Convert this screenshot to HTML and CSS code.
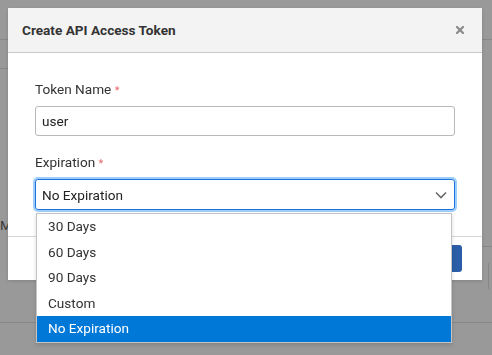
FILE: index.html
```html
<!DOCTYPE html>
<html lang="en">
<head>
  <meta charset="UTF-8">
  <meta name="viewport" content="width=device-width, initial-scale=1.0">
  <title>Create API Access Token</title>
  <link rel="stylesheet" href="styles.css">
</head>
<body>
  <div class="page">
    <div class="page-top"></div>
    <div class="page-tabs"><div class="page-tab"></div></div>
    <div class="page-text">Max</div>
    <div class="page-row page-row-right"></div>
    <div class="page-row page-row-split"><div class="page-cell"></div></div>
    <div class="page-row"></div>
    <div class="page-row"></div>
  </div>

  <div class="modal">
    <div class="modal-header">
      <h2>Create API Access Token</h2>
      <svg class="close" width="8" height="8" viewBox="0 0 8 8">
        <path d="M1 1 L7 7 M7 1 L1 7" stroke="#8a8a8a" stroke-width="2.2" stroke-linecap="square"/>
      </svg>
    </div>
    <div class="modal-body">
      <div class="form-group">
        <label>Token Name <span class="req">*</span></label>
        <div class="input">user</div>
      </div>
      <div class="form-group">
        <label>Expiration <span class="req">*</span></label>
        <div class="select">
          <span>No Expiration</span>
          <svg width="12" height="8" viewBox="0 0 12 8">
            <path d="M1 1.5 L6 6.5 L11 1.5" fill="none" stroke="#6b6b6b" stroke-width="1.6"/>
          </svg>
        </div>
      </div>
    </div>
    <div class="modal-footer">
      <button type="button">Create</button>
    </div>
  </div>

  <ul class="dropdown">
    <li>30 Days</li>
    <li>60 Days</li>
    <li>90 Days</li>
    <li>Custom</li>
    <li class="selected">No Expiration</li>
  </ul>
</body>
</html>
```

FILE: styles.css
```css
body {
  margin: 0;
  background-color: #999999;
  font-family: Roboto, "Liberation Sans", Arial, sans-serif;
  font-size: 13.6px;
  color: #333;
  overflow: hidden;
}

/* page behind the overlay */
.page {
  height: 355px;
}

.page-top {
  height: 39px;
  border-bottom: 1px solid #888;
}

.page-tabs {
  height: 29px;
}

.page-tab {
  width: 120px;
  height: 28px;
  border-bottom: 1px solid #888;
}

.page-text {
  margin-top: 148px;
  color: #3a3a3a;
  line-height: 16px;
}

.page-row {
  height: 33px;
  border-bottom: 1px solid #888;
}

.page-row-right {
  height: 13px;
  margin-left: 460px;
}

.page-row-split {
  height: 42px;
  border-bottom: none;
  display: flex;
  justify-content: flex-end;
}

.page-row-split .page-cell {
  width: 3px;
  height: 26px;
  margin-top: 16px;
  border-left: 1px solid #888;
}

/* modal */
.modal {
  position: fixed;
  left: 8px;
  top: 8px;
  width: 474px;
  background: #fff;
  box-shadow: 0 1px 3px rgba(0, 0, 0, 0.15);
}

.modal-header {
  height: 44px;
  display: flex;
  align-items: center;
  justify-content: space-between;
  padding: 0 18px 0 14px;
  background: #f3f3f3;
  border-bottom: 1px solid #c9c9c9;
}

.modal-header h2 {
  margin: 0;
  font-size: 13.6px;
  font-weight: 700;
  color: #333;
}

.modal-body {
  padding: 28px 27px 26px;
}

.form-group + .form-group {
  margin-top: 18px;
}

.form-group label {
  display: block;
  height: 16px;
  line-height: 16px;
  margin-bottom: 9px;
  color: #333;
}

.req {
  color: #e8676b;
  font-size: 11px;
  line-height: 0;
}

.input {
  height: 28px;
  line-height: 28px;
  padding: 0 6px;
  border: 1px solid #b9b9b9;
  border-radius: 3px;
  color: #222;
}

.select {
  height: 29px;
  display: flex;
  align-items: center;
  justify-content: space-between;
  padding: 0 7px 0 6px;
  border: 1px solid #1b72d8;
  border-radius: 3px;
  box-shadow: 0 0 0 2px #9ccdfb;
  color: #222;
}

.modal-footer {
  height: 43px;
  display: flex;
  align-items: center;
  justify-content: flex-end;
  padding-right: 20px;
  border-top: 1px solid #d6d6d6;
}

.modal-footer button {
  height: 27px;
  width: 80px;
  border: none;
  border-radius: 3px;
  background: #2b5ea8;
  color: #fff;
  font-family: inherit;
  font-size: 13px;
}

/* open select list */
.dropdown {
  position: fixed;
  left: 36px;
  top: 213px;
  width: 414px;
  margin: 0;
  padding: 0;
  list-style: none;
  background: #fff;
  border: 1px solid #c4c4c4;
  box-shadow: 0 2px 4px rgba(0, 0, 0, 0.15);
}

.dropdown li {
  height: 25.5px;
  line-height: 25.5px;
  padding-left: 11px;
  color: #333;
}

.dropdown li.selected {
  background: #0078d7;
  color: #fff;
}
```
